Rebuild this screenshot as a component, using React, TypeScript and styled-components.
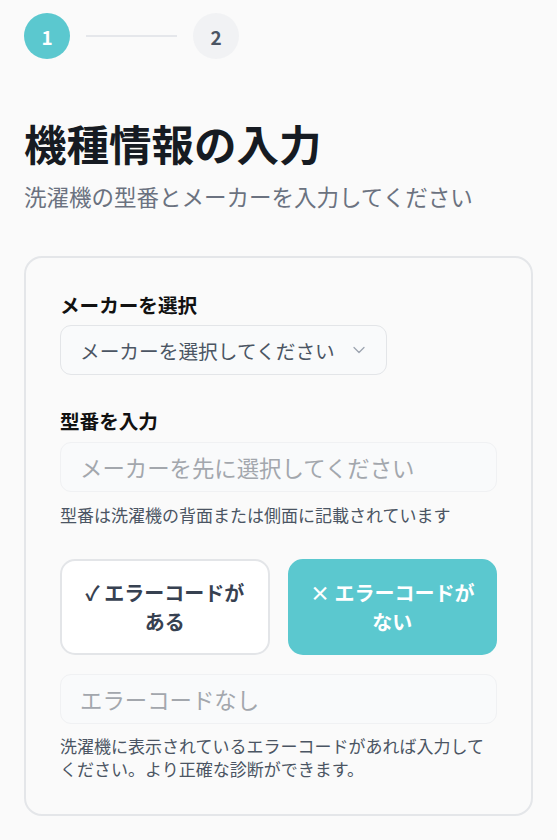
import React from 'react';
import styled, { createGlobalStyle } from 'styled-components';
import { ChevronDown } from 'lucide-react';

const GlobalStyle = createGlobalStyle`
  html, body {
    margin: 0;
    padding: 0;
    background: #fafafa;
  }
  body {
    font-family: 'Noto Sans CJK JP', 'Noto Sans', sans-serif;
    color: #111827;
  }
  * {
    box-sizing: border-box;
  }
`;

const teal = '#5bc8cf';

const Page = styled.div`
  padding: 13px 24px 24px 24px;
`;

const Stepper = styled.div`
  display: flex;
  align-items: center;
  gap: 16px;
`;

const StepDot = styled.div<{ active?: boolean }>`
  width: 46px;
  height: 46px;
  border-radius: 50%;
  display: flex;
  align-items: center;
  justify-content: center;
  font-size: 19px;
  font-weight: 700;
  background: ${(props) => (props.active ? teal : '#f1f2f4')};
  color: ${(props) => (props.active ? '#ffffff' : '#4b5563')};
`;

const StepLine = styled.div`
  width: 91px;
  height: 2px;
  background: #e5e7eb;
`;

const Title = styled.h1`
  margin: 56px 0 0 0;
  font-size: 42.5px;
  line-height: 56px;
  font-weight: 700;
  color: #161b22;
`;

const Subtitle = styled.p`
  margin: 10px 0 0 0;
  font-size: 22.5px;
  line-height: 30px;
  color: #6b7280;
`;

const Card = styled.div`
  margin-top: 45px;
  width: 509px;
  border: 2px solid #e4e6e9;
  border-radius: 18px;
  padding: 34px;
  display: flex;
  flex-direction: column;
`;

const Label = styled.div<{ top?: number }>`
  margin-top: ${(props) => props.top ?? 0}px;
  font-size: 19.6px;
  line-height: 26px;
  font-weight: 700;
  color: #111111;
`;

const Select = styled.div`
  margin-top: 7px;
  align-self: flex-start;
  height: 50px;
  width: 327px;
  padding: 0 17px 0 19px;
  display: flex;
  align-items: center;
  justify-content: space-between;
  border: 1px solid #e3e5e8;
  border-radius: 11px;
  background: #f9fafb;
  font-size: 19.7px;
  color: #4b5563;
  svg {
    color: #9ca3af;
  }
`;

const Input = styled.div<{ top?: number }>`
  margin-top: ${(props) => props.top ?? 0}px;
  height: 50px;
  padding: 0 19px;
  display: flex;
  align-items: center;
  border: 1px solid #f0f1f3;
  border-radius: 11px;
  background: #f9fafb;
  font-size: 22.4px;
  color: #a3a7ad;
`;

const Help = styled.p<{ top?: number }>`
  margin: ${(props) => props.top ?? 0}px 0 0 0;
  font-size: 17px;
  line-height: 23px;
  color: #4b5563;
`;

const ChoiceRow = styled.div`
  margin-top: 33px;
  display: grid;
  grid-template-columns: 1fr 1fr;
  gap: 18px;
`;

const Choice = styled.div<{ selected?: boolean }>`
  height: 96px;
  padding: 0 18px;
  display: flex;
  align-items: center;
  justify-content: center;
  text-align: center;
  border-radius: 15px;
  font-size: 20px;
  line-height: 29px;
  font-weight: 700;
  border: 2px solid ${(props) => (props.selected ? teal : '#e3e5e8')};
  background: ${(props) => (props.selected ? teal : '#ffffff')};
  color: ${(props) => (props.selected ? '#ffffff' : '#374151')};
`;

export default function App() {
  return (
    <>
      <GlobalStyle />
      <Page>
        <Stepper>
          <StepDot active>1</StepDot>
          <StepLine />
          <StepDot>2</StepDot>
        </Stepper>

        <Title>機種情報の入力</Title>
        <Subtitle>洗濯機の型番とメーカーを入力してください</Subtitle>

        <Card>
          <Label>メーカーを選択</Label>
          <Select>
            <span>メーカーを選択してください</span>
            <ChevronDown size={20} strokeWidth={1.5} />
          </Select>

          <Label top={33}>型番を入力</Label>
          <Input top={8}>メーカーを先に選択してください</Input>
          <Help top={11}>型番は洗濯機の背面または側面に記載されています</Help>

          <ChoiceRow>
            <Choice>✓ エラーコードがある</Choice>
            <Choice selected>× エラーコードがない</Choice>
          </ChoiceRow>

          <Input top={19}>エラーコードなし</Input>
          <Help top={10}>
            洗濯機に表示されているエラーコードがあれば入力してください。より正確な診断ができます。
          </Help>
        </Card>
      </Page>
    </>
  );
}
